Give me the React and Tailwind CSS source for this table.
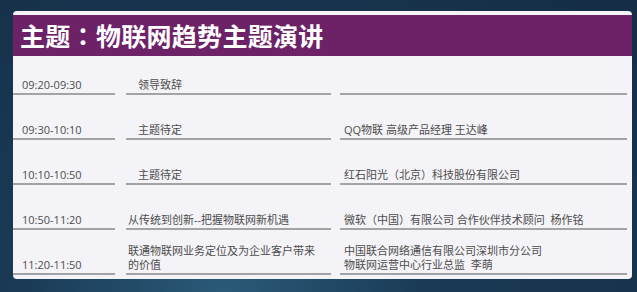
import React from 'react';

const rows = [
  { time: '09:20-09:30', topic: ['领导致辞'], speaker: [], indent: true, h: 'h-[39px]' },
  { time: '09:30-10:10', topic: ['主题待定'], speaker: ['QQ物联 高级产品经理 王达峰'], indent: true, h: 'h-[45px]' },
  { time: '10:10-10:50', topic: ['主题待定'], speaker: ['红石阳光（北京）科技股份有限公司'], indent: true, h: 'h-[45px]' },
  { time: '10:50-11:20', topic: ['从传统到创新--把握物联网新机遇'], speaker: ['微软（中国）有限公司 合作伙伴技术顾问  杨作铭'], indent: false, h: 'h-[45px]' },
  {
    time: '11:20-11:50',
    topic: ['联通物联网业务定位及为企业客户带来', '的价值'],
    speaker: ['中国联合网络通信有限公司深圳市分公司', '物联网运营中心行业总监  李萌'],
    indent: false,
    h: 'h-[45px]',
  },
];

const App = () => {
  return (
    <div
      className="w-[637px] h-[292px] overflow-hidden pt-[11px] pl-[13px] bg-[radial-gradient(ellipse_at_35%_100%,#2a5a78_0%,#1a3a55_35%,#152d45_100%)]"
      style={{ fontFamily: '"Open Sans","Noto Sans CJK SC",sans-serif' }}
    >
      <div className="w-[619px] h-[268px] bg-[#f4f3f7] rounded-[4px] pt-[4px] flex flex-col">
        <div className="h-[41px] bg-[#6d2268] flex items-center pl-[7px]">
          <h1
            className="text-white text-[25px] font-bold leading-none tracking-[0.3px]"
            style={{ fontFamily: '"Noto Sans CJK TC",sans-serif' }}
          >
            主题：物联网趋势主题演讲
          </h1>
        </div>
        {rows.map((r) => (
          <div key={r.time} className={`flex ${r.h} text-[11px] leading-[14px] text-[#4d4d4d]`}>
            <div className="w-[102px] border-b-2 border-[#a3a3a3] flex items-end pl-[9px] pb-[1px]">
              {r.time}
            </div>
            <div
              className={`w-[205px] ml-[11px] border-b-2 border-[#a3a3a3] flex flex-col justify-end pb-[1px] ${
                r.indent ? 'pl-[12px]' : 'pl-[2px]'
              }`}
            >
              {r.topic.map((t) => (
                <div key={t} className="whitespace-nowrap">{t}</div>
              ))}
            </div>
            <div className="w-[287px] ml-[9px] border-b-2 border-[#a3a3a3] flex flex-col justify-end pl-[4px] pb-[1px]">
              {r.speaker.map((t) => (
                <div key={t} className="whitespace-pre">{t}</div>
              ))}
            </div>
          </div>
        ))}
      </div>
    </div>
  );
};

export default App;
